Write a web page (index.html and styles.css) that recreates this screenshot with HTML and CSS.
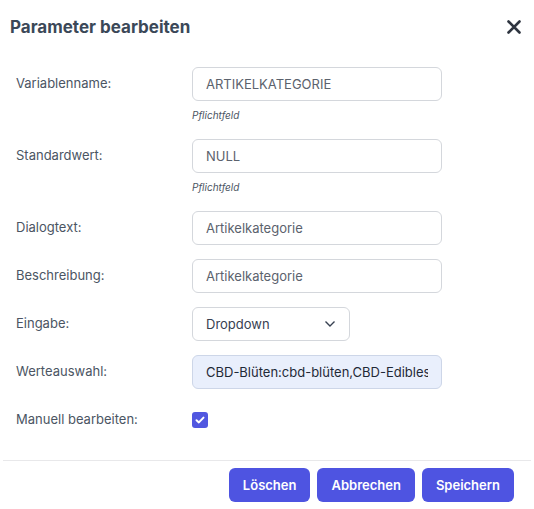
FILE: index.html
```html
<!DOCTYPE html>
<html lang="de">

<head>
    <meta charset="UTF-8">
    <meta name="viewport" content="width=device-width, initial-scale=1.0">
    <title>Parameter bearbeiten</title>
    <link rel="stylesheet" href="styles.css">
</head>

<body>
    <div class="dialog">
        <div class="dialog-head">
            <h1>Parameter bearbeiten</h1>
            <button type="button" class="closeBtn" aria-label="Schließen">
                <svg width="14" height="14" viewBox="0 0 14 14">
                    <path d="M1.5 1.5 L12.5 12.5 M12.5 1.5 L1.5 12.5" stroke="#2f3540" stroke-width="2.6" stroke-linecap="round" />
                </svg>
            </button>
        </div>
        <form class="paramForm" onsubmit="return false;">
            <label for="varname">Variablenname:</label>
            <div class="field">
                <input type="text" id="varname" value="ARTIKELKATEGORIE">
                <span class="hint">Pflichtfeld</span>
            </div>

            <label for="default">Standardwert:</label>
            <div class="field">
                <input type="text" id="default" value="NULL">
                <span class="hint">Pflichtfeld</span>
            </div>

            <label for="dialogtext">Dialogtext:</label>
            <div class="field">
                <input type="text" id="dialogtext" value="Artikelkategorie">
            </div>

            <label for="desc">Beschreibung:</label>
            <div class="field">
                <input type="text" id="desc" value="Artikelkategorie">
            </div>

            <label for="input">Eingabe:</label>
            <div class="field">
                <div class="select">
                    <span>Dropdown</span>
                    <svg width="12" height="8" viewBox="0 0 12 8">
                        <path d="M1.5 1.5 L6 6 L10.5 1.5" fill="none" stroke="#374151" stroke-width="1.4" />
                    </svg>
                </div>
            </div>

            <label for="values">Werteauswahl:</label>
            <div class="field">
                <input type="text" id="values" class="filled" value="CBD-Blüten:cbd-blüten,CBD-Edibles:cbd-edibles">
            </div>

            <label>Manuell bearbeiten:</label>
            <div class="field check">
                <span class="checkbox">
                    <svg width="10" height="8" viewBox="0 0 10 8">
                        <path d="M1.5 4.2 L3.9 6.4 L8.5 1.6" fill="none" stroke="#fff" stroke-width="2" stroke-linecap="round" stroke-linejoin="round" />
                    </svg>
                </span>
            </div>
        </form>
        <div class="dialog-foot">
            <button type="button" class="myButton">Löschen</button>
            <button type="button" class="myButton">Abbrechen</button>
            <button type="button" class="myButton">Speichern</button>
        </div>
    </div>
</body>

</html>
```

FILE: styles.css
```css
body {
    margin: 0;
    background: #fff;
    font-family: Inter, "Noto Sans", sans-serif;
    color: #4b5563;
}

.dialog {
    width: 534px;
}

.dialog-head {
    display: flex;
    align-items: center;
    justify-content: space-between;
    height: 54px;
    padding: 0 13px 0 10px;
}

h1 {
    margin: 0;
    font-size: 17px;
    font-weight: 700;
    color: #3b4858;
}

.closeBtn {
    border: 0;
    background: none;
    padding: 0;
    display: flex;
    cursor: pointer;
}

.paramForm {
    display: grid;
    grid-template-columns: 176px 250px;
    row-gap: 14px;
    padding: 13px 16px 0;
}

.paramForm>label {
    font-size: 13px;
    line-height: 20px;
    padding-top: 6px;
}

.field {
    display: flex;
    flex-direction: column;
    align-items: flex-start;
}

.field input {
    box-sizing: border-box;
    width: 250px;
    height: 34px;
    border: 1px solid #d4d7dc;
    border-radius: 6px;
    padding: 0 13px;
    font-family: inherit;
    font-size: 13px;
    color: #5b626d;
    background: #fff;
}

.field input.filled {
    background: #e9effc;
    border-color: #cdd6e8;
    color: #1f2937;
}

.hint {
    margin-top: 4px;
    font-size: 10px;
    line-height: 20px;
    font-style: italic;
    color: #4b5563;
}

.select {
    box-sizing: border-box;
    width: 158px;
    height: 34px;
    border: 1px solid #d4d7dc;
    border-radius: 6px;
    padding: 0 13px;
    display: flex;
    align-items: center;
    justify-content: space-between;
    font-size: 13px;
    color: #374151;
}

.check {
    height: 34px;
    justify-content: center;
}

.checkbox {
    width: 16px;
    height: 16px;
    border-radius: 3px;
    background: #5157e0;
    display: flex;
    align-items: center;
    justify-content: center;
}

.dialog-foot {
    margin: 23px 3px 0;
    border-top: 1px solid #e8e8ea;
    padding: 7px 17px 0 0;
    display: flex;
    justify-content: flex-end;
    gap: 7px;
}

.myButton {
    height: 34px;
    padding: 0 14px;
    border: 0;
    border-radius: 6px;
    background: #4e54e1;
    color: #fff;
    font-family: inherit;
    font-size: 13px;
    font-weight: 600;
    cursor: pointer;
}
```
